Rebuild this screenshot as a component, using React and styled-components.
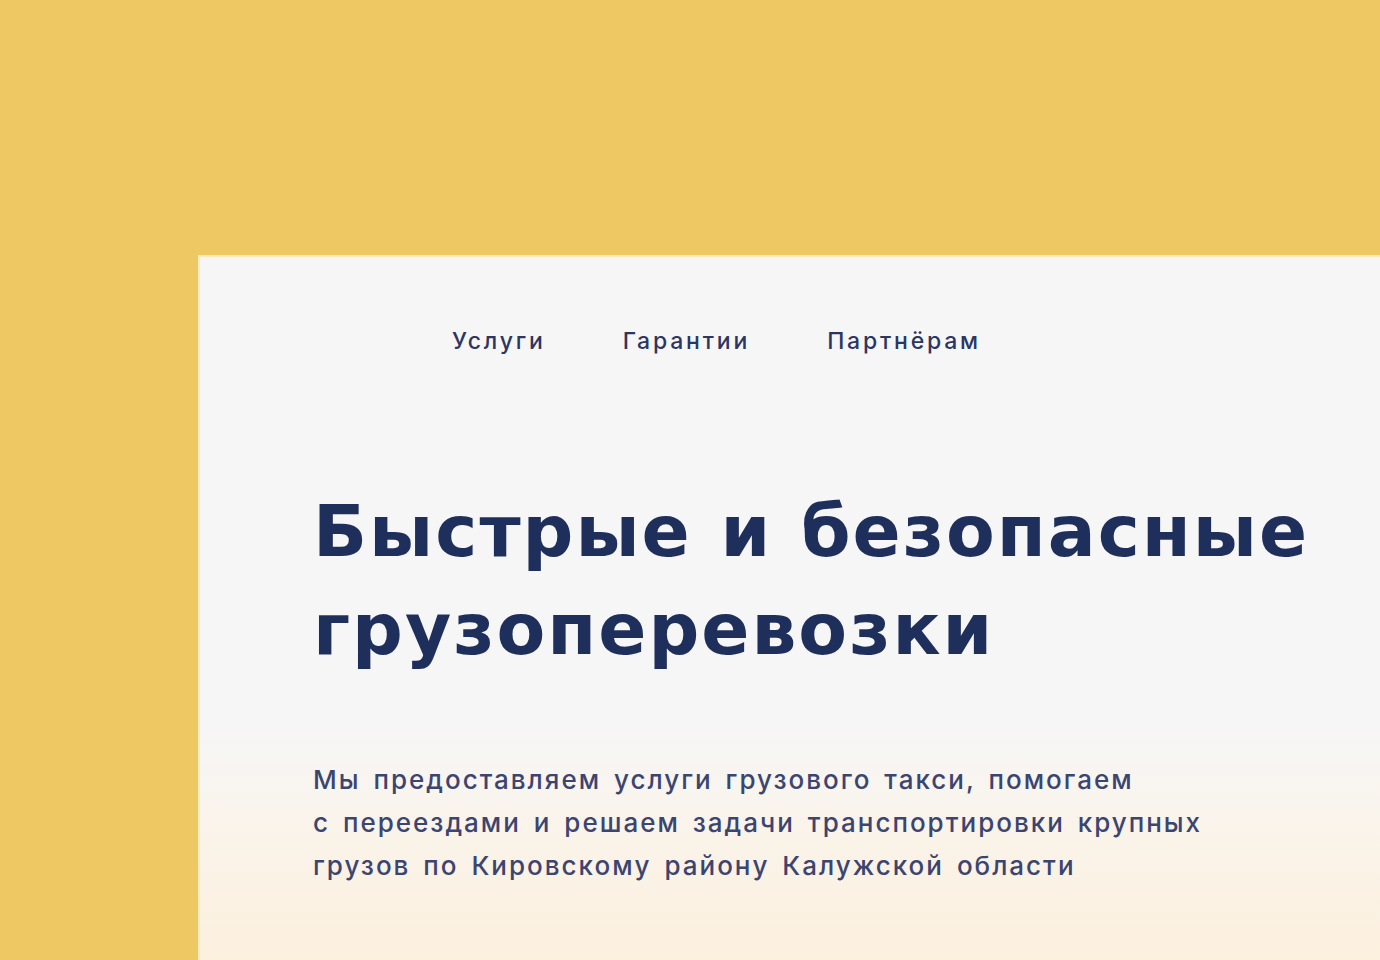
import React from 'react'
import styled, { createGlobalStyle } from 'styled-components'

const Global = createGlobalStyle`
  html, body {
    margin: 0;
    padding: 0;
    background: #eec862;
  }
  body {
    font-family: "Inter", "Noto Sans", sans-serif;
    overflow: hidden;
  }
`

const Page = styled.div`
  width: 1380px;
  height: 960px;
  padding: 257px 0 0 200px;
  box-sizing: border-box;
  background: #eec862;
`

const Panel = styled.section`
  height: 100%;
  box-sizing: border-box;
  background: linear-gradient(180deg, #f7f6f7 0%, #f7f6f7 66%, #faf3e8 84%, #fcf0de 100%);
  box-shadow: -1px -1px 0 1px rgba(255, 244, 214, 0.8);
  padding: 70px 0 0 113px;
`

const Nav = styled.nav`
  display: flex;
  gap: 77px;
  padding-left: 139px;
`

const NavLink = styled.a`
  font-size: 23px;
  font-weight: 500;
  color: #2b3663;
  text-decoration: none;
  letter-spacing: 2.8px;
`

const Title = styled.h1`
  margin: 128px 0 0;
  font-family: "DejaVu Sans", "Inter", sans-serif;
  font-size: 71px;
  line-height: 98px;
  font-weight: 700;
  color: #1f2f5c;
  letter-spacing: 2px;
  word-spacing: 2px;
`

const Lead = styled.p`
  margin: 79px 0 0;
  font-size: 26px;
  line-height: 43px;
  font-weight: 500;
  color: #3b4570;
  letter-spacing: 2px;
  word-spacing: 4px;
`

export default function App() {
  return (
    <>
      <Global />
      <Page>
        <Panel>
          <Nav>
            <NavLink href="#">Услуги</NavLink>
            <NavLink href="#">Гарантии</NavLink>
            <NavLink href="#">Партнёрам</NavLink>
          </Nav>
          <Title>
            Быстрые и безопасные
            <br />
            грузоперевозки
          </Title>
          <Lead>
            Мы предоставляем услуги грузового такси, помогаем
            <br />
            с переездами и решаем задачи транспортировки крупных
            <br />
            грузов по Кировскому району Калужской области
          </Lead>
        </Panel>
      </Page>
    </>
  )
}
